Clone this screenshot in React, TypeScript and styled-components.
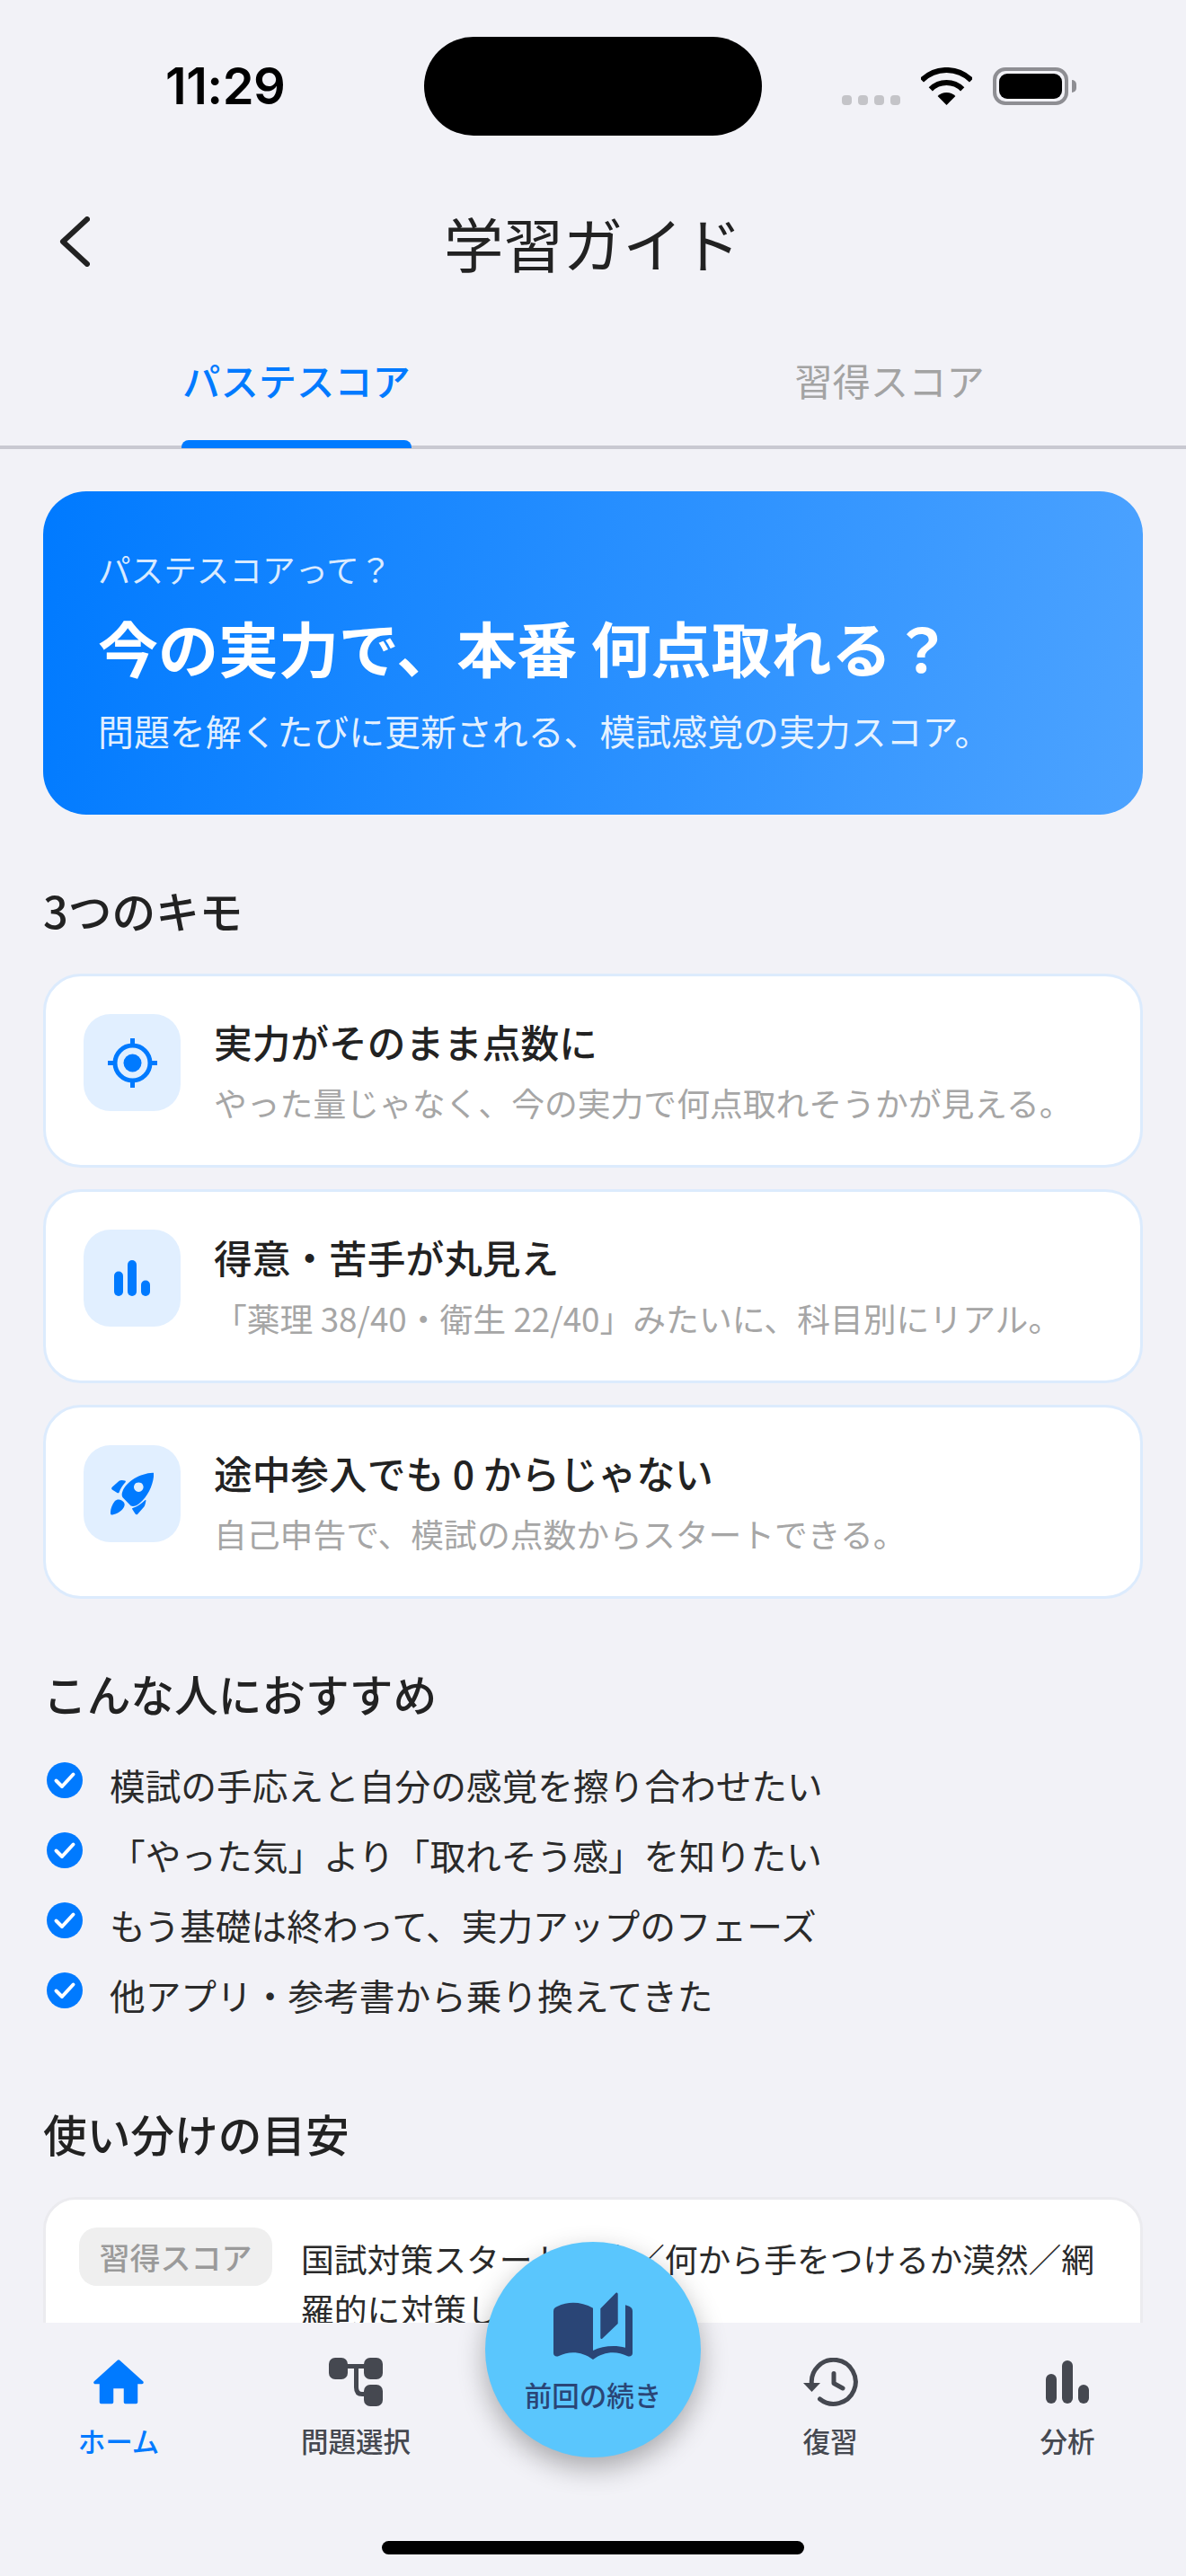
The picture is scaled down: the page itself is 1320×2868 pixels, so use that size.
import styled, { createGlobalStyle } from 'styled-components';

const GlobalStyle = createGlobalStyle`
  html, body {
    margin: 0;
    padding: 0;
    background: #f2f2f7;
  }
  * {
    box-sizing: border-box;
  }
`;

const kimoItems = [
  {
    icon: 'target',
    title: '実力がそのまま点数に',
    desc: 'やった量じゃなく、今の実力で何点取れそうかが見える。',
  },
  {
    icon: 'bars',
    title: '得意・苦手が丸見え',
    desc: '「薬理 38/40・衛生 22/40」みたいに、科目別にリアル。',
  },
  {
    icon: 'rocket',
    title: '途中参入でも 0 からじゃない',
    desc: '自己申告で、模試の点数からスタートできる。',
  },
];

const recommendItems = [
  '模試の手応えと自分の感覚を擦り合わせたい',
  '「やった気」より「取れそう感」を知りたい',
  'もう基礎は終わって、実力アップのフェーズ',
  '他アプリ・参考書から乗り換えてきた',
];

const TargetIcon = () => (
  <svg width="55" height="55" viewBox="0 0 55 55">
    <circle cx="27.5" cy="27.5" r="19.5" fill="none" stroke="#007aff" strokeWidth="5" />
    <circle cx="27.5" cy="27.5" r="10" fill="#007aff" />
    <path d="M27.5 0v8M27.5 47v8M0 27.5h8M47 27.5h8" stroke="#007aff" strokeWidth="5" />
  </svg>
);

const BarsIcon = ({ size, color }: { size: number; color: string }) => (
  <svg width={size} height={size} viewBox="0 0 48 48" fill={color}>
    <rect x="0" y="15" width="12" height="33" rx="6" />
    <rect x="18" y="0" width="12" height="48" rx="6" />
    <rect x="36" y="27" width="12" height="21" rx="6" />
  </svg>
);

const RocketIcon = () => (
  <svg width="48" height="48" viewBox="0 0 48 48" fill="#007aff">
    <path
      fillRule="evenodd"
      d="M47 .8C48 .6 48.4 1.2 48.2 2C48 13 42 27 32 35C29 37.5 26 38.4 22.6 37.6L13.4 28C12.4 26 12.4 24 13.4 21.5C18 10 33 1.5 47 .8ZM31.3 11.4a5.3 5.3 0 1 0 .01 0Z"
    />
    <path d="M2 16.6L9.6 9.8C11 8.8 14 9 16 9.6C17.2 10 17 10.8 16.4 11.6C13.4 15 11 18.6 9.6 22.4C9.2 23.4 8.2 23.6 7.4 23L1.8 19.6C.8 18.8 1 17.6 2 16.6Z" />
    <path d="M38.4 31.2C39.2 30.6 39.6 31 39.4 32C39 34.4 38.4 36.8 37.4 38.6L30.4 46.4C29.4 47.6 28.2 47.4 27.6 46.4L24.4 41.6C23.8 40.6 24.2 40 25.2 39.8C29.6 38.4 34.4 35 38.4 31.2Z" />
    <path d="M0 45.6C-.2 42 1.4 36 5 32C7 30 10 30 12.4 31.4C14.6 32.6 16 34.4 15.6 36.8C15 40.6 11.4 44 7.4 45.8C5 47 2.4 47.6 1 47.6C.4 47.6 0 46.8 0 45.6Z" />
  </svg>
);

const CheckIcon = () => (
  <svg width="40" height="40" viewBox="0 0 40 40">
    <circle cx="20" cy="20" r="20" fill="#007aff" />
    <path
      d="M10.5 20.5L17 27L29.5 13.5"
      fill="none"
      stroke="#fff"
      strokeWidth="4"
      strokeLinecap="round"
      strokeLinejoin="round"
    />
  </svg>
);

const HomeIcon = () => (
  <svg width="56" height="50" viewBox="0 0 56 50" fill="#007aff">
    <path
      d="M28 2L2 25.5H8.5V47.5H20.5V30.5H35.5V47.5H47.5V25.5H54Z"
      stroke="#007aff"
      strokeWidth="3.5"
      strokeLinejoin="round"
    />
  </svg>
);

const TreeIcon = () => (
  <svg width="60" height="54" viewBox="0 0 60 54" fill="#454850">
    <rect x="0" y="0" width="21" height="24" rx="7" />
    <rect x="39" y="0" width="21" height="24" rx="7" />
    <rect x="39" y="30" width="21" height="24" rx="7" />
    <path
      d="M18 9.5H42M30.5 9.5V33C30.5 38 32.5 40.5 37 40.5H42"
      fill="none"
      stroke="#454850"
      strokeWidth="5"
    />
  </svg>
);

const HistoryIcon = () => (
  <svg width="61" height="54" viewBox="0 0 61 54" fill="none" stroke="#454850" strokeWidth="5">
    <path d="M9.5 30A24.5 24.5 0 1 1 18.5 46" strokeLinecap="round" />
    <path d="M0 28H19L9.5 38Z" fill="#454850" stroke="none" />
    <path d="M34 17.5V28.5L44 34" strokeLinecap="round" strokeLinejoin="round" />
  </svg>
);

const BookIcon = () => (
  <svg width="88" height="75" viewBox="0 0 88 75" fill="#2a4576">
    <path d="M0 21C0 18 2 17 4 16C10 13 16 11.7 22 11.7C29 11.7 37 13.5 44 17.7V65C54 60 68 58.5 80 61.7V14.3C84 15.3 88 17 88 21V68C88 71 85 72.5 82 71C70 65 56 66 44 75C32 66 18 65 6 71C3 72.5 0 71 0 68Z" />
    <path d="M52.3 18.3L69 1.2C70 0 71.7 .7 71.7 2.2V35L54.5 51.5C53.5 52.5 52.3 52 52.3 50.5Z" />
  </svg>
);

const WifiIcon = () => (
  <svg width="57" height="42" viewBox="0 0 57 42">
    <path d="M.9 14.4A39 39 0 0 1 56.1 14.4" fill="none" stroke="#000" strokeWidth="6" />
    <path d="M10.8 24.3A25 25 0 0 1 46.2 24.3" fill="none" stroke="#000" strokeWidth="6" />
    <path d="M18.6 32.1A14 14 0 0 1 38.4 32.1L28.5 42Z" fill="#000" />
  </svg>
);

const kimoIcon = (name: string) => {
  if (name === 'target') return <TargetIcon />;
  if (name === 'bars') return <BarsIcon size={40} color="#007aff" />;
  return <RocketIcon />;
};

const App: React.FC = () => {
  return (
    <Screen>
      <GlobalStyle />
      <StatusBar>
        <Time>11:29</Time>
        <Island />
        <StatusIcons>
          <Signal>
            <SignalDot />
            <SignalDot />
            <SignalDot />
            <SignalDot />
          </Signal>
          <WifiIcon />
          <Battery>
            <BatteryLevel />
          </Battery>
          <BatteryCap />
        </StatusIcons>
      </StatusBar>

      <Header>
        <BackButton>
          <svg width="34" height="56" viewBox="0 0 34 56" fill="none">
            <path
              d="M31 3L4 28L31 53"
              stroke="#222"
              strokeWidth="6"
              strokeLinecap="round"
              strokeLinejoin="round"
            />
          </svg>
        </BackButton>
        <HeaderTitle>学習ガイド</HeaderTitle>
      </Header>

      <TabBar>
        <Tab>
          <TabLabel $active>パステスコア</TabLabel>
        </Tab>
        <Tab>
          <TabLabel>習得スコア</TabLabel>
        </Tab>
      </TabBar>

      <Content>
        <Hero>
          <HeroSub>パステスコアって？</HeroSub>
          <HeroTitle>今の実力で、本番 何点取れる？</HeroTitle>
          <HeroDesc>問題を解くたびに更新される、模試感覚の実力スコア。</HeroDesc>
        </Hero>

        <SectionTitle $top={74}>3つのキモ</SectionTitle>
        <CardList>
          {kimoItems.map((item) => (
            <KimoCard key={item.title}>
              <IconBox>{kimoIcon(item.icon)}</IconBox>
              <KimoText>
                <KimoTitle>{item.title}</KimoTitle>
                <KimoDesc>{item.desc}</KimoDesc>
              </KimoText>
            </KimoCard>
          ))}
        </CardList>

        <SectionTitle $top={73}>こんな人におすすめ</SectionTitle>
        <CheckList>
          {recommendItems.map((text) => (
            <CheckRow key={text}>
              <CheckMark>
                <CheckIcon />
              </CheckMark>
              {text}
            </CheckRow>
          ))}
        </CheckList>

        <SectionTitle $top={82}>使い分けの目安</SectionTitle>
        <UsageCard>
          <UsagePill>習得スコア</UsagePill>
          <UsageText>国試対策スタート直後／何から手をつけるか漠然／網羅的に対策したい</UsageText>
        </UsageCard>
      </Content>

      <BottomNav>
        <NavRow>
          <NavItem>
            <NavIcon>
              <HomeIcon />
            </NavIcon>
            <NavLabel $active>ホーム</NavLabel>
          </NavItem>
          <NavItem>
            <NavIcon>
              <TreeIcon />
            </NavIcon>
            <NavLabel>問題選択</NavLabel>
          </NavItem>
          <div />
          <NavItem>
            <NavIcon>
              <HistoryIcon />
            </NavIcon>
            <NavLabel>復習</NavLabel>
          </NavItem>
          <NavItem>
            <NavIcon>
              <BarsIcon size={48} color="#454850" />
            </NavIcon>
            <NavLabel>分析</NavLabel>
          </NavItem>
        </NavRow>
        <HomeIndicator />
        <Fab>
          <BookIcon />
          <FabLabel>前回の続き</FabLabel>
        </Fab>
      </BottomNav>
    </Screen>
  );
};
export default App;

const Screen = styled.div`
  width: 1320px;
  height: 2868px;
  display: flex;
  flex-direction: column;
  overflow: hidden;
  background: #f2f2f7;
  color: #222;
  font-family: 'Noto Sans CJK JP', 'Noto Sans', sans-serif;
`;

const StatusBar = styled.div`
  display: grid;
  grid-template-columns: 472px 376px 1fr;
  align-items: center;
  padding-top: 41px;
`;

const Time = styled.div`
  padding-left: 184px;
  font-family: Inter, 'Liberation Sans', sans-serif;
  font-size: 56px;
  font-weight: 600;
  letter-spacing: -0.5px;
  line-height: 110px;
  color: #000;
`;

const Island = styled.div`
  height: 110px;
  border-radius: 55px;
  background: #000;
`;

const StatusIcons = styled.div`
  display: flex;
  align-items: flex-end;
  height: 42px;
  margin-left: 89px;
`;

const Signal = styled.div`
  display: flex;
  gap: 7px;
  margin-right: 23px;
`;

const SignalDot = styled.div`
  width: 11px;
  height: 11px;
  border-radius: 4px;
  background: #c4c4c8;
`;

const Battery = styled.div`
  width: 84px;
  height: 42px;
  margin-left: 23px;
  padding: 3px;
  border: 4px solid #8e8e93;
  border-radius: 14px;
`;

const BatteryLevel = styled.div`
  width: 100%;
  height: 100%;
  border-radius: 9px;
  background: #000;
`;

const BatteryCap = styled.div`
  width: 5px;
  height: 14px;
  margin: 0 0 14px 4px;
  border-radius: 0 5px 5px 0;
  background: #8e8e93;
`;

const Header = styled.div`
  display: grid;
  grid-template-columns: 1fr auto 1fr;
  align-items: center;
  height: 100px;
  margin-top: 68px;
`;

const BackButton = styled.div`
  display: flex;
  padding-left: 66px;
`;

const HeaderTitle = styled.h1`
  margin: 0;
  font-size: 66.4px;
  font-weight: 400;
  line-height: 100px;
  color: #222;
`;

const TabBar = styled.div`
  display: grid;
  grid-template-columns: 1fr 1fr;
  margin-top: 55px;
  border-bottom: 4px solid #c9c9d1;
`;

const Tab = styled.div`
  display: flex;
  justify-content: center;
  height: 122px;
`;

const TabLabel = styled.div<{ $active?: boolean }>`
  position: relative;
  padding: 0 1px;
  font-size: 42.3px;
  font-weight: ${(p) => (p.$active ? 500 : 400)};
  line-height: 98px;
  color: ${(p) => (p.$active ? '#007aff' : '#a3a3a3')};

  &::after {
    content: '';
    display: ${(p) => (p.$active ? 'block' : 'none')};
    position: absolute;
    left: 0;
    right: 0;
    bottom: -3px;
    height: 9px;
    border-radius: 8px 8px 0 0;
    background: #007aff;
  }
`;

const Content = styled.div`
  flex: 1;
  min-height: 0;
  overflow: hidden;
  padding: 47px 48px 0;
`;

const Hero = styled.div`
  height: 360px;
  padding: 57px 61px 0;
  border-radius: 48px;
  background: linear-gradient(100deg, #007aff 0%, #4da3ff 100%);
  color: #fff;
`;

const HeroSub = styled.div`
  font-size: 36.6px;
  line-height: 60px;
  color: rgba(255, 255, 255, 0.85);
`;

const HeroTitle = styled.div`
  margin-top: 11px;
  font-size: 67px;
  font-weight: 700;
  line-height: 90px;
  white-space: nowrap;
`;

const HeroDesc = styled.div`
  margin-top: 18px;
  font-size: 39.9px;
  line-height: 60px;
  color: rgba(255, 255, 255, 0.9);
  white-space: nowrap;
`;

const SectionTitle = styled.h2<{ $top: number }>`
  margin: ${(p) => p.$top}px 0 0;
  font-size: 48.7px;
  font-weight: 500;
  line-height: 64px;
  color: #222;
`;

const CardList = styled.div`
  display: flex;
  flex-direction: column;
  gap: 24px;
  margin-top: 39px;
`;

const KimoCard = styled.div`
  display: flex;
  align-items: center;
  gap: 37px;
  height: 216px;
  padding: 0 42px;
  border: 3px solid #dcebfd;
  border-radius: 42px;
  background: #fff;
`;

const IconBox = styled.div`
  display: flex;
  align-items: center;
  justify-content: center;
  flex: none;
  width: 108px;
  height: 108px;
  margin-bottom: 18px;
  border-radius: 30px;
  background: #e1efff;
`;

const KimoText = styled.div`
  display: flex;
  flex-direction: column;
  gap: 8px;
  padding-top: 2px;
`;

const KimoTitle = styled.div`
  font-size: 42.7px;
  font-weight: 500;
  line-height: 60px;
  color: #222;
`;

const KimoDesc = styled.div`
  font-size: 36.8px;
  line-height: 60px;
  color: #a6a6a6;
  white-space: nowrap;
`;

const CheckList = styled.div`
  margin-top: 32px;
`;

const CheckRow = styled.div`
  display: flex;
  align-items: flex-start;
  gap: 30px;
  height: 78px;
  padding-left: 4px;
  font-size: 39.7px;
  line-height: 75px;
  color: #2a2a2a;
`;

const CheckMark = styled.div`
  display: flex;
  flex: none;
  margin-top: 13px;
`;

const UsageCard = styled.div`
  display: flex;
  align-items: flex-start;
  gap: 32px;
  height: 300px;
  margin-top: 39px;
  padding: 31px 37px 0;
  border: 3px solid #ebebef;
  border-radius: 36px;
  background: #fff;
`;

const UsagePill = styled.div`
  flex: none;
  width: 215px;
  height: 65px;
  border-radius: 20px;
  background: #efefef;
  font-size: 34px;
  font-weight: 500;
  line-height: 66px;
  text-align: center;
  color: #9a9a9a;
`;

const UsageText = styled.div`
  margin-top: 6px;
  font-size: 36.8px;
  line-height: 56px;
  color: #2a2a2a;
`;

const BottomNav = styled.div`
  position: relative;
  flex: none;
  height: 282px;
  padding-top: 38px;
  background: #f2f2f7;
`;

const NavRow = styled.div`
  display: grid;
  grid-template-columns: repeat(5, 264px);
`;

const NavItem = styled.div`
  display: flex;
  flex-direction: column;
  align-items: center;
  gap: 18px;
`;

const NavIcon = styled.div`
  display: flex;
  align-items: center;
  justify-content: center;
  height: 56px;
`;

const NavLabel = styled.div<{ $active?: boolean }>`
  font-size: 30.5px;
  font-weight: 500;
  line-height: 39px;
  color: ${(p) => (p.$active ? '#007aff' : '#454850')};
`;

const HomeIndicator = styled.div`
  width: 470px;
  height: 15px;
  margin: 92px auto 0;
  border-radius: 8px;
  background: #000;
`;

const Fab = styled.div`
  position: absolute;
  top: -90px;
  left: 540px;
  display: flex;
  flex-direction: column;
  align-items: center;
  gap: 19px;
  width: 240px;
  height: 240px;
  padding-top: 56px;
  border-radius: 50%;
  background: #5ac6fd;
  box-shadow: 0 12px 30px rgba(0, 0, 0, 0.3);
`;

const FabLabel = styled.div`
  font-size: 30.5px;
  font-weight: 500;
  line-height: 40px;
  color: #2a4576;
`;
